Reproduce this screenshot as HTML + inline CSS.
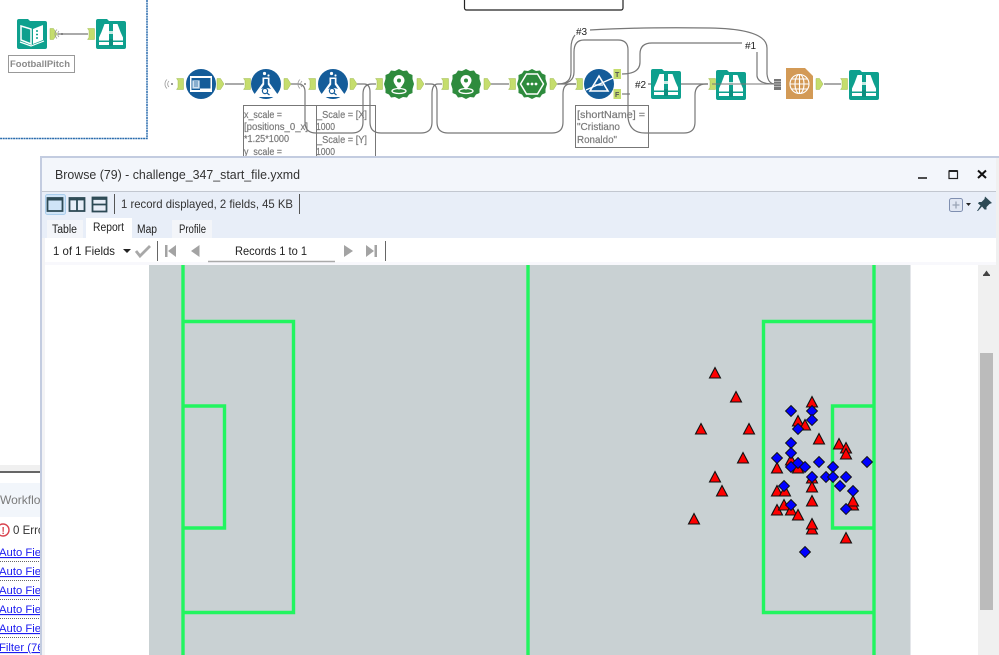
<!DOCTYPE html>
<html><head><meta charset="utf-8"><style>
html,body{margin:0;padding:0;background:#fff;width:999px;height:655px;overflow:hidden}
svg{display:block;font-family:"Liberation Sans",sans-serif;filter:blur(.3px)}
</style></head><body>
<svg width="999" height="655" viewBox="0 0 999 655" xmlns="http://www.w3.org/2000/svg">
<defs>
<g id="bino">
<path d="M0 2a2 2 0 0 1 2-2h9l2 2h15a2 2 0 0 1 2 2v24a2 2 0 0 1-2 2H2a2 2 0 0 1-2-2z" fill="#0ea08e"/>
<path d="M8.500 5H13V26H3V18.500L5.500 13z M21.500 5H17V26H27V18.500L24.500 13z" fill="#fff"/>
<path d="M3 21.500H13V23H3z M17 21.500H27V23H17z" fill="#0ea08e"/>
<path d="M13 12h4v3h-4z" fill="#c8eae4"/>
<path d="M13 20h4v7h-4z" fill="#0b8f7f"/>
</g>
<g id="flask">
<circle r="15" fill="#145c99"/>
<path d="M-3.500-6.500H3.500V-1L11 9.500Q12.500 13 8.500 13H-8.500Q-12.500 13-11 9.500L-3.500-1z" fill="#fff"/>
<path d="M-1.800-5H1.800V.5L5 5Q0 3-5 5L-1.800.5z" fill="#145c99"/>
<circle cx="-1" cy="7" r="2.600" fill="#fff" stroke="#145c99" stroke-width="1.200"/>
<path d="M1 9l2.500 2" stroke="#145c99" stroke-width="1.200"/>
<circle cx="-1.500" cy="-10.500" r="1.600" fill="#fff"/><circle cx="2.500" cy="-8.500" r="1.100" fill="#fff"/>
</g>
<g id="badge">
<path d="M0-15 4-13 8-13.500 10-10.500 13.500-9 13.500-5 15 0 13.500 5 13.500 9 10 10.500 8 13.500 4 13 0 15-4 13-8 13.500-10 10.500-13.500 9-13.500 5-15 0-13.500-5-13.500-9-10-10.500-8-13.500-4-13z" fill="#2e8b3d"/>
</g>
<g id="pin">
<use href="#badge"/>
<path d="M0-9a5.500 5.500 0 0 1 5.500 5.500C5.500-.500 2 3 0 6-2 3-5.500-.500-5.500-3.500A5.500 5.500 0 0 1 0-9z" fill="#fff"/>
<circle cy="-3.500" r="2" fill="#2e8b3d"/>
<ellipse cy="7" rx="7" ry="2.500" fill="none" stroke="#fff" stroke-width="1.300"/>
</g>
<path id="out" d="M-3-5.500h3.500L4 0 .5 5.500H-3z" fill="#c5dd6d" stroke="#9fb955" stroke-width=".5"/>
<path id="in" d="M-3.500-5.500h7v11h-7l1.500-2v-7z" fill="#c5dd6d" stroke="#9fb955" stroke-width=".5"/>
<g id="sig" fill="none" stroke="#999" stroke-width=".8"><path d="M-1-3a4 4 0 0 0 0 6M-3-4.500a6 6 0 0 0 0 9"/><circle cx="2" r=".9" fill="#555" stroke="none"/></g>
<path id="t" d="M0-5.500 5.500 5H-5.500z" fill="#f00" stroke="#111" stroke-width="1.100"/>
<path id="d" d="M0-5.500 5.500 0 0 5.500-5.500 0z" fill="#00f" stroke="#111" stroke-width=".9"/>
</defs>

<rect width="999" height="655" fill="#fff"/>

<!-- canvas -->
<path d="M147 0V138.500H0" fill="none" stroke="#2a6cad" stroke-width="1.500" stroke-dasharray="2 .6"/>
<path d="M464.500 0v8a2 2 0 0 0 2 2H621a2 2 0 0 0 2-2V0" fill="none" stroke="#222" stroke-width="1.200"/>

<!-- wires -->
<g fill="none" stroke="#777" stroke-width="1.200">
<path d="M58 34H88"/>
<path d="M225 84H244"/>
<path d="M291 84H298Q305 84 305 92V122Q305 133 316 133H352Q363 133 363 122V94Q363 84 372 84H376"/>
<path d="M357 84H364Q370 84 370 92V122Q370 133 381 133H421Q432 133 432 122V94Q432 84 438 84H442"/>
<path d="M425 84H431Q437 84 437 92V122Q437 133 448 133H552Q563 133 563 122V94Q563 84 570 84H576"/>
<path d="M491 84H509"/>
<path d="M557 84H576"/>
<path d="M558 84Q571 84 571 72V48Q571 40 575 35"/>
<path d="M558 84Q574 84 574 72V52Q574 40 584 40H618Q628 40 628 50V118Q630 133 645 133H684Q695 133 695 122V95Q695 84 706 84H708"/>
<path d="M590 30Q640 27 710 28Q767 29 767 48V74Q768 84 775 84"/>
<path d="M622 74Q640 74 640 62V54Q640 43 652 43H742"/>
<path d="M757 52V76Q758 84 775 84"/>
<path d="M622 94H630"/>
<path d="M648 84H708"/>
<path d="M824 84H841"/>
</g>
<text x="576" y="35" font-size="10" fill="#222">#3</text>
<text x="745" y="49" font-size="10" fill="#222">#1</text>
<text x="635" y="88" font-size="10" fill="#222">#2</text>

<!-- anchors -->
<use href="#out" x="53" y="34"/><use href="#in" x="91" y="34"/>
<use href="#in" x="180" y="84"/><use href="#out" x="220" y="84"/>
<use href="#in" x="247" y="84"/><use href="#out" x="287" y="84"/>
<use href="#in" x="312" y="84"/><use href="#out" x="353" y="84"/>
<use href="#in" x="379" y="84"/><use href="#out" x="420" y="84"/>
<use href="#in" x="445" y="84"/><use href="#out" x="487" y="84"/>
<use href="#in" x="512" y="84"/><use href="#out" x="553" y="84"/>
<use href="#in" x="579" y="84"/><use href="#in" x="712" y="84"/>
<use href="#out" x="819" y="84"/><use href="#in" x="844" y="84"/>
<use href="#sig" x="170" y="84"/><use href="#sig" x="303" y="84"/><use href="#sig" x="60" y="34"/>
<rect x="613.500" y="69" width="7.500" height="10" fill="#c5dd6d"/><text x="615" y="77" font-size="7" font-weight="bold" fill="#555">T</text>
<rect x="613.500" y="89" width="7.500" height="10" fill="#c5dd6d"/><text x="615" y="97" font-size="7" font-weight="bold" fill="#555">F</text>

<!-- book -->
<g transform="translate(17 19)">
<path d="M0 2a2 2 0 0 1 2-2h9l2 2h15a2 2 0 0 1 2 2v24a2 2 0 0 1-2 2H2a2 2 0 0 1-2-2z" fill="#0ea08e"/>
<path d="M4 7l10 3V25L4 21z" fill="none" stroke="#fff" stroke-width="1.500"/>
<path d="M26 6 16 10V25L26 21z" fill="#fff"/>
<path d="M19 12h2M19 15.500h2M19 19h2" stroke="#0ea08e" stroke-width="1.500"/>
<path d="M3 23l11 4 13-5" fill="none" stroke="#fff" stroke-width="1.200"/>
</g>
<use href="#bino" x="96" y="19"/>
<rect x="8.500" y="55.500" width="66" height="17" fill="#fff" stroke="#999"/>
<text x="10" y="67" font-size="9.500" font-weight="bold" fill="#8a8a8a" textLength="60" lengthAdjust="spacingAndGlyphs">FootballPitch</text>

<!-- tools -->
<g transform="translate(201 84)">
<circle r="15" fill="#145c99"/>
<rect x="-11" y="-8" width="22" height="16" fill="#fff"/>
<rect x="-9.500" y="-6" width="19" height="12" fill="#145c99"/>
<path d="M-9-4H-1V5H-9z M-7-2h4M-7 0h4M-7 2h4" fill="#cfe0ef" stroke="#145c99" stroke-width=".7"/>
<rect x="-1" y="4.500" width="11" height="1.500" fill="#fff"/>
</g>
<use href="#flask" x="266" y="84"/><use href="#flask" x="333" y="84"/>
<use href="#pin" x="399" y="84"/><use href="#pin" x="466" y="84"/>
<g transform="translate(532 84)">
<use href="#badge"/>
<path d="M-5.500-10h11L11.500 0 5.500 10h-11L-11.500 0z" fill="none" stroke="#fff" stroke-width="1.500"/>
<circle cx="-4" r="1.400" fill="#fff"/><circle r="1.400" fill="#fff"/><circle cx="4" r="1.400" fill="#fff"/>
</g>
<g transform="translate(599 84)">
<circle r="15" fill="#145c99"/>
<path d="M0-8 9 7H-9z" fill="none" stroke="#fff" stroke-width="1.600"/>
<path d="M-13 6 14-6" stroke="#fff" stroke-width="1.300"/>
<path d="M-4 1H4" stroke="#fff" stroke-width="1.300"/>
</g>
<use href="#bino" x="651" y="69"/><use href="#bino" x="716" y="70"/><use href="#bino" x="849" y="70"/>
<path d="M712 84H775" stroke="#777" stroke-width="1.100"/>
<rect x="774" y="79" width="7" height="11" fill="#777"/>
<path d="M774 81.500h7M774 84h7M774 86.500h7" stroke="#ccc" stroke-width=".7"/>
<g transform="translate(786 68)">
<path d="M0 0H19L27 8V31H0z" fill="#d39a56"/>
<g fill="none" stroke="#fff" stroke-width="1.100"><circle cx="13.500" cy="16" r="9.500"/><ellipse cx="13.500" cy="16" rx="4.500" ry="9.500"/><path d="M13.500 6.500v19M4 16h19M5.500 11h16M5.500 21h16"/></g>
</g>

<!-- annotations -->
<g fill="none" stroke="#777" stroke-width="1"><path d="M243.500 156V105.500H375.500V156M316.500 105.500V156"/><rect x="575.500" y="105.500" width="73" height="42"/></g>
<g font-size="10.500" fill="#7a7a7a" stroke="#7a7a7a" stroke-width=".2" lengthAdjust="spacingAndGlyphs">
<text x="244" y="118" textLength="38" lengthAdjust="spacingAndGlyphs">x_scale =</text><text x="244" y="130" textLength="64" lengthAdjust="spacingAndGlyphs">[positions_0_x]</text><text x="244" y="142" textLength="45" lengthAdjust="spacingAndGlyphs">*1.25*1000</text><text x="244" y="155" textLength="38" lengthAdjust="spacingAndGlyphs">y_scale =</text>
<text x="317" y="118" textLength="50" lengthAdjust="spacingAndGlyphs">_Scale = [X]</text><text x="316" y="130" textLength="19" lengthAdjust="spacingAndGlyphs">1000</text><text x="317" y="143" textLength="50" lengthAdjust="spacingAndGlyphs">_Scale = [Y]</text><text x="316" y="155" textLength="19" lengthAdjust="spacingAndGlyphs">1000</text>
<text x="577" y="118" textLength="68" lengthAdjust="spacingAndGlyphs">[shortName] =</text><text x="577" y="130" textLength="43" lengthAdjust="spacingAndGlyphs">"Cristiano</text><text x="577" y="143" textLength="40" lengthAdjust="spacingAndGlyphs">Ronaldo"</text>
</g>

<!-- lower-left panel -->
<rect x="0" y="465" width="40" height="6" fill="#f0f0f0"/>
<rect x="0" y="471" width="40" height="2" fill="#666"/>
<rect x="0" y="483" width="40" height="34" fill="#f2f6fb"/>
<text x="0" y="504" font-size="12" fill="#7a7a7a">Workflow</text>
<circle cx="3" cy="530" r="6" fill="#fff" stroke="#d9434e" stroke-width="1.400"/>
<text x="1.500" y="534" font-size="10" font-weight="bold" fill="#d9434e">!</text>
<text x="13" y="534" font-size="11.500" fill="#333">0 Errors</text>
<g font-size="11.300" fill="#1c1cf0" text-decoration="underline">
<text x="-1" y="556">Auto Field</text><text x="-1" y="575">Auto Field</text><text x="-1" y="594">Auto Field</text><text x="-1" y="613">Auto Field</text><text x="-1" y="632">Auto Field</text><text x="-1" y="651">Filter (76)</text>
</g>
<path d="M0 561.500H40M0 580.500H40M0 599.500H40M0 618.500H40M0 637.500H40" stroke="#666" stroke-dasharray="1 1"/>

<!-- browse window -->
<rect x="40" y="156" width="959" height="499" fill="#fff"/>
<rect x="40" y="156" width="959" height="2" fill="#c3cce0"/>
<rect x="40" y="156" width="2" height="499" fill="#c3cce0"/>
<rect x="42" y="158" width="957" height="33" fill="#f3f6fb"/>
<rect x="42" y="191" width="957" height="1" fill="#c2c7d0"/>
<rect x="42" y="192" width="957" height="46" fill="#e8eef8"/>
<rect x="42" y="238" width="3" height="417" fill="#f3f3f5"/>
<text x="55" y="179" font-size="12.500" fill="#333" textLength="245" lengthAdjust="spacingAndGlyphs">Browse (79) - challenge_347_start_file.yxmd</text>
<path d="M918 178H927" stroke="#222" stroke-width="1.600"/>
<rect x="949" y="171" width="8.500" height="7.500" fill="none" stroke="#222" stroke-width="1.200"/><path d="M949 171H957.500" stroke="#222" stroke-width="2"/>
<path d="M978 170.500 986 178M986 170.500 978 178" stroke="#111" stroke-width="2"/>

<!-- toolbar -->
<rect x="45.500" y="194.500" width="20" height="20" rx="2" fill="#cfe4f7" stroke="#a9cdec"/>
<g fill="none" stroke="#2d4a55" stroke-width="1.800">
<rect x="47.500" y="198" width="15" height="13"/><path d="M47.500 199.500H62.500" stroke-width="2"/>
<rect x="69.500" y="198" width="15" height="13"/><path d="M69.500 199.500H84.500M77 198V211"/>
<rect x="92.500" y="197.500" width="14" height="14"/><path d="M92.500 204.500H106.500M92.500 199H106.500"/>
</g>
<path d="M114.500 194V214M299.500 194V214" stroke="#555"/>
<text x="121" y="208" font-size="12" fill="#333" textLength="172" lengthAdjust="spacingAndGlyphs">1 record displayed, 2 fields, 45 KB</text>
<rect x="949.500" y="198.500" width="13" height="13" rx="2" fill="#e0e6f2" stroke="#7f8fb0"/>
<path d="M956 201.500v7M952.500 205h7" stroke="#9aa4b5" stroke-width="1.300"/>
<path d="M966 203h5l-2.500 3z" fill="#222"/>
<path d="M985 196.500l7 6.500-2.500 1-3 3 0 2.500-2 0-2.500-3-4 4.500-1 0 3.500-5.500-2.500-2 1-1.500 2.500 0 3-3z" fill="#2d4a55"/>

<!-- tabs -->
<rect x="47" y="220" width="36" height="18" fill="#f3f5f9"/>
<rect x="86" y="218" width="46" height="20" fill="#fff"/>
<rect x="172" y="220" width="40" height="18" fill="#f3f5f9"/>
<g font-size="11.500" fill="#222">
<text x="52" y="233" textLength="25" lengthAdjust="spacingAndGlyphs">Table</text><text x="93" y="231" textLength="31" lengthAdjust="spacingAndGlyphs">Report</text><text x="137" y="233" textLength="20" lengthAdjust="spacingAndGlyphs">Map</text><text x="179" y="233" textLength="27" lengthAdjust="spacingAndGlyphs">Profile</text>
</g>

<!-- record row -->
<rect x="45" y="238" width="951" height="24" fill="#fff"/>
<rect x="45" y="262" width="951" height="3" fill="#f8f8fc"/>
<text x="53" y="255" font-size="12" fill="#222" textLength="62" lengthAdjust="spacingAndGlyphs">1 of 1 Fields</text>
<path d="M123 249h8l-4 4z" fill="#222"/>
<path d="M136 251l4 5 10-10" fill="none" stroke="#a8a8a8" stroke-width="2.800"/>
<path d="M157.500 241V261M385.500 241V261" stroke="#666"/>
<g fill="#a3a3a3">
<path d="M165 245h2.500v12H165zM176 245v12l-8-6z"/>
<path d="M199.500 245v12l-8.500-6z"/>
<path d="M344 245v12l9-6z"/>
<path d="M366 245v12l8-6zM374.500 245h2.500v12h-2.500z"/>
</g>
<rect x="208" y="240" width="127" height="22" fill="#fff"/>
<path d="M208 261.500H335" stroke="#aaa" stroke-width="1.500"/>
<text x="235" y="255" font-size="12" fill="#222" textLength="72" lengthAdjust="spacingAndGlyphs">Records 1 to 1</text>

<!-- pitch -->
<rect x="149" y="265" width="761" height="390" fill="#c9d1d3"/>
<rect x="910" y="265" width="1" height="390" fill="#e4e6ea"/>
<g fill="none" stroke="#22f55f" stroke-width="3.400">
<path d="M183 265V655M528 265V655M874 265V655"/>
<path d="M183 321.500H293.500V612.500H183"/>
<path d="M183 406H224.500V528H183"/>
<path d="M874 321.500H763.500V612.500H874"/>
<path d="M874 406H832.500V528H874"/>
</g>

<!-- markers -->
<g>
<use href="#t" x="715" y="373"/><use href="#t" x="736" y="397"/><use href="#t" x="701" y="429"/><use href="#t" x="749" y="429"/><use href="#t" x="743" y="458"/>
<use href="#t" x="812" y="402"/><use href="#t" x="798" y="421"/><use href="#t" x="805" y="425"/><use href="#t" x="819" y="439"/>
<use href="#t" x="839" y="444"/><use href="#t" x="846" y="448"/><use href="#t" x="846" y="454"/>
<use href="#t" x="715" y="477"/><use href="#t" x="722" y="491"/><use href="#t" x="694" y="519"/>
<use href="#t" x="777" y="468"/><use href="#t" x="791" y="460"/><use href="#t" x="798" y="468"/>
<use href="#t" x="812" y="478"/><use href="#t" x="812" y="487"/>
<use href="#t" x="777" y="491"/><use href="#t" x="785" y="491"/><use href="#t" x="812" y="501"/>
<use href="#t" x="777" y="510"/><use href="#t" x="784" y="505"/><use href="#t" x="791" y="510"/><use href="#t" x="798" y="515"/>
<use href="#t" x="812" y="529"/><use href="#t" x="812" y="524"/><use href="#t" x="846" y="538"/>
<use href="#t" x="853" y="505"/><use href="#t" x="853" y="501"/>
<use href="#d" x="791" y="411"/><use href="#d" x="812" y="411"/><use href="#d" x="812" y="420"/><use href="#d" x="798" y="429"/>
<use href="#d" x="791" y="443"/><use href="#d" x="791" y="453"/><use href="#d" x="777" y="458"/>
<use href="#d" x="798" y="463"/><use href="#d" x="819" y="462"/><use href="#d" x="867" y="462"/>
<use href="#d" x="791" y="467"/><use href="#d" x="805" y="467"/><use href="#d" x="833" y="467"/>
<use href="#d" x="812" y="477"/><use href="#d" x="826" y="477"/><use href="#d" x="833" y="477"/><use href="#d" x="846" y="477"/>
<use href="#d" x="840" y="486"/><use href="#d" x="784" y="486"/><use href="#d" x="853" y="491"/>
<use href="#d" x="791" y="505"/><use href="#d" x="846" y="509"/><use href="#d" x="805" y="552"/>
</g>

<!-- scrollbar -->
<rect x="978" y="265" width="18" height="390" fill="#f0f0f0"/>
<path d="M983 275.500h7l-3.500-5z" fill="#444"/><rect x="983" y="274.500" width="7" height="1.500" fill="#444"/>
<rect x="980" y="353" width="13" height="257" fill="#bbb"/>
<rect x="996" y="158" width="3" height="497" fill="#f0f0f0"/>
</svg>
</body></html>
